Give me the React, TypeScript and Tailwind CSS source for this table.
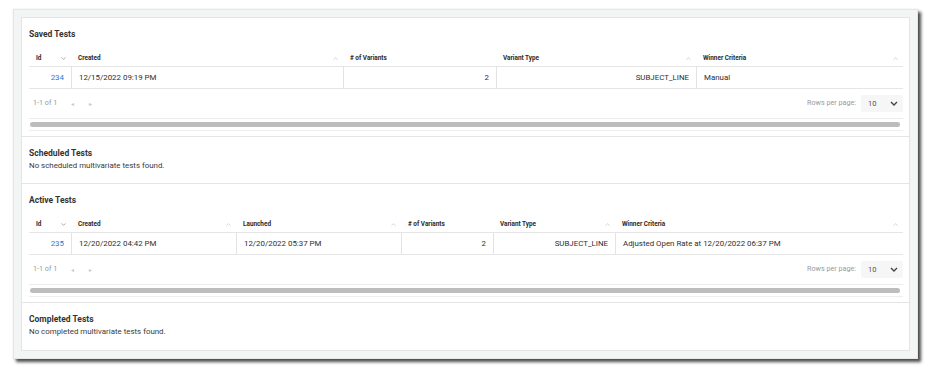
import React from "react";

type Col = { label: string; w: string; arrow?: "up" | "down" };
type Cell = { text: string; right?: boolean; link?: boolean };

const SortArrow = ({ dir }: { dir: "up" | "down" }) => (
  <svg width="5" height="3" viewBox="0 0 5 3" className="shrink-0">
    <polyline
      points={dir === "up" ? "0.5,2.6 2.5,0.6 4.5,2.6" : "0.5,0.4 2.5,2.4 4.5,0.4"}
      fill="none"
      stroke={dir === "up" ? "#c4c4c4" : "#8a8a8a"}
      strokeWidth="0.7"
    />
  </svg>
);

const savedCols: Col[] = [
  { label: "Id", w: "w-[42px]", arrow: "down" },
  { label: "Created", w: "w-[272px]", arrow: "up" },
  { label: "# of Variants", w: "w-[153px]" },
  { label: "Variant Type", w: "w-[200px]", arrow: "up" },
  { label: "Winner Criteria", w: "w-[207px]", arrow: "up" },
];

const savedRow: Cell[] = [
  { text: "234", right: true, link: true },
  { text: "12/15/2022 09:19 PM" },
  { text: "2", right: true },
  { text: "SUBJECT_LINE", right: true },
  { text: "Manual" },
];

const activeCols: Col[] = [
  { label: "Id", w: "w-[42px]", arrow: "down" },
  { label: "Created", w: "w-[165px]", arrow: "up" },
  { label: "Launched", w: "w-[165px]", arrow: "up" },
  { label: "# of Variants", w: "w-[92px]" },
  { label: "Variant Type", w: "w-[122px]", arrow: "up" },
  { label: "Winner Criteria", w: "w-[288px]", arrow: "up" },
];

const activeRow: Cell[] = [
  { text: "235", right: true, link: true },
  { text: "12/20/2022 04:42 PM" },
  { text: "12/20/2022 05:37 PM" },
  { text: "2", right: true },
  { text: "SUBJECT_LINE", right: true },
  { text: "Adjusted Open Rate at 12/20/2022 06:37 PM" },
];

const Title = ({ children }: { children: React.ReactNode }) => (
  <div className="h-[10px] leading-[10px] text-[8.5px] font-bold text-[#333]">{children}</div>
);

const Table = ({ cols, row }: { cols: Col[]; row: Cell[] }) => (
  <div className="mt-[12px]">
    {/* header */}
    <div className="flex h-[16px] border-b border-[#e6e6e6]">
      {cols.map((c) => (
        <div key={c.label} className={`${c.w} flex items-center justify-between pl-[7px] pr-[5px]`}>
          <span className="text-[6.4px] font-bold text-[#2a2a2a]">{c.label}</span>
          {c.arrow && <SortArrow dir={c.arrow} />}
        </div>
      ))}
    </div>
    {/* data row */}
    <div className="flex h-[22px] border-b border-[#e6e6e6]">
      {row.map((cell, i) => (
        <div
          key={i}
          className={`${cols[i].w} flex items-center text-[7.9px] ${
            cell.right ? "justify-end pr-[7px]" : "pl-[7px]"
          } ${i > 0 ? "border-l border-[#e3e3e3]" : ""} ${cell.link ? "text-[#1e7ad3]" : "text-[#2e2e2e]"}`}
        >
          {cell.text}
        </div>
      ))}
    </div>
    {/* pagination */}
    <div className="flex h-[30px] items-center justify-between border-b border-[#ececec] pl-[4px]">
      <div className="flex items-center text-[7.2px] text-[#9a9a9a]">
        <span>1-1 of 1</span>
        <span className="ml-[14px] text-[6px] text-[#c8c8c8]">◂</span>
        <span className="ml-[15px] text-[6px] text-[#c8c8c8]">▸</span>
      </div>
      <div className="flex items-center">
        <span className="text-[7.2px] text-[#9a9a9a]">Rows per page:</span>
        <div className="ml-[5px] flex h-[17px] w-[42px] items-center justify-between rounded-[2px] bg-[#f6f6f6] pl-[7px] pr-[5px]">
          <span className="text-[7.5px] text-[#555]">10</span>
          <svg width="8" height="5" viewBox="0 0 8 5">
            <polyline points="1,1 4,4 7,1" fill="none" stroke="#444" strokeWidth="1.4" />
          </svg>
        </div>
      </div>
    </div>
    {/* horizontal scrollbar */}
    <div className="flex h-[12px] items-center border-b border-[#eeeeee] pl-[1px] pr-[3px]">
      <div className="h-[5px] w-full rounded-full bg-[#bdbdbd]" />
    </div>
  </div>
);

export default function App() {
  return (
    <div className="h-[369px] w-[930px] bg-white pl-[13px] pt-[9px] font-[Roboto,'Liberation_Sans',sans-serif]">
      <div className="h-[350px] w-[905px] border border-[#e4e7e7] bg-[#f3f5f5] p-[7px] shadow-[3px_3px_3px_rgba(0,0,0,0.7),0_0_2px_rgba(0,0,0,0.08)]">
        <div className="h-[334px] border border-[#e2e5e5] bg-white">
          <section className="border-b border-[#e4e4e4] pl-[7px] pr-[6px] pb-[5px] pt-[11px]">
            <Title>Saved Tests</Title>
            <Table cols={savedCols} row={savedRow} />
          </section>

          <section className="border-b border-[#e4e4e4] px-[7px] pb-[12px] pt-[11px]">
            <Title>Scheduled Tests</Title>
            <div className="mt-[3px] h-[10px] leading-[10px] text-[7.9px] text-[#3a3a3a]">
              No scheduled multivariate tests found.
            </div>
          </section>

          <section className="border-b border-[#e4e4e4] pl-[7px] pr-[6px] pb-[5px] pt-[11px]">
            <Title>Active Tests</Title>
            <Table cols={activeCols} row={activeRow} />
          </section>

          <section className="px-[7px] pt-[11px]">
            <Title>Completed Tests</Title>
            <div className="mt-[3px] h-[10px] leading-[10px] text-[7.9px] text-[#3a3a3a]">
              No completed multivariate tests found.
            </div>
          </section>
        </div>
      </div>
    </div>
  );
}
